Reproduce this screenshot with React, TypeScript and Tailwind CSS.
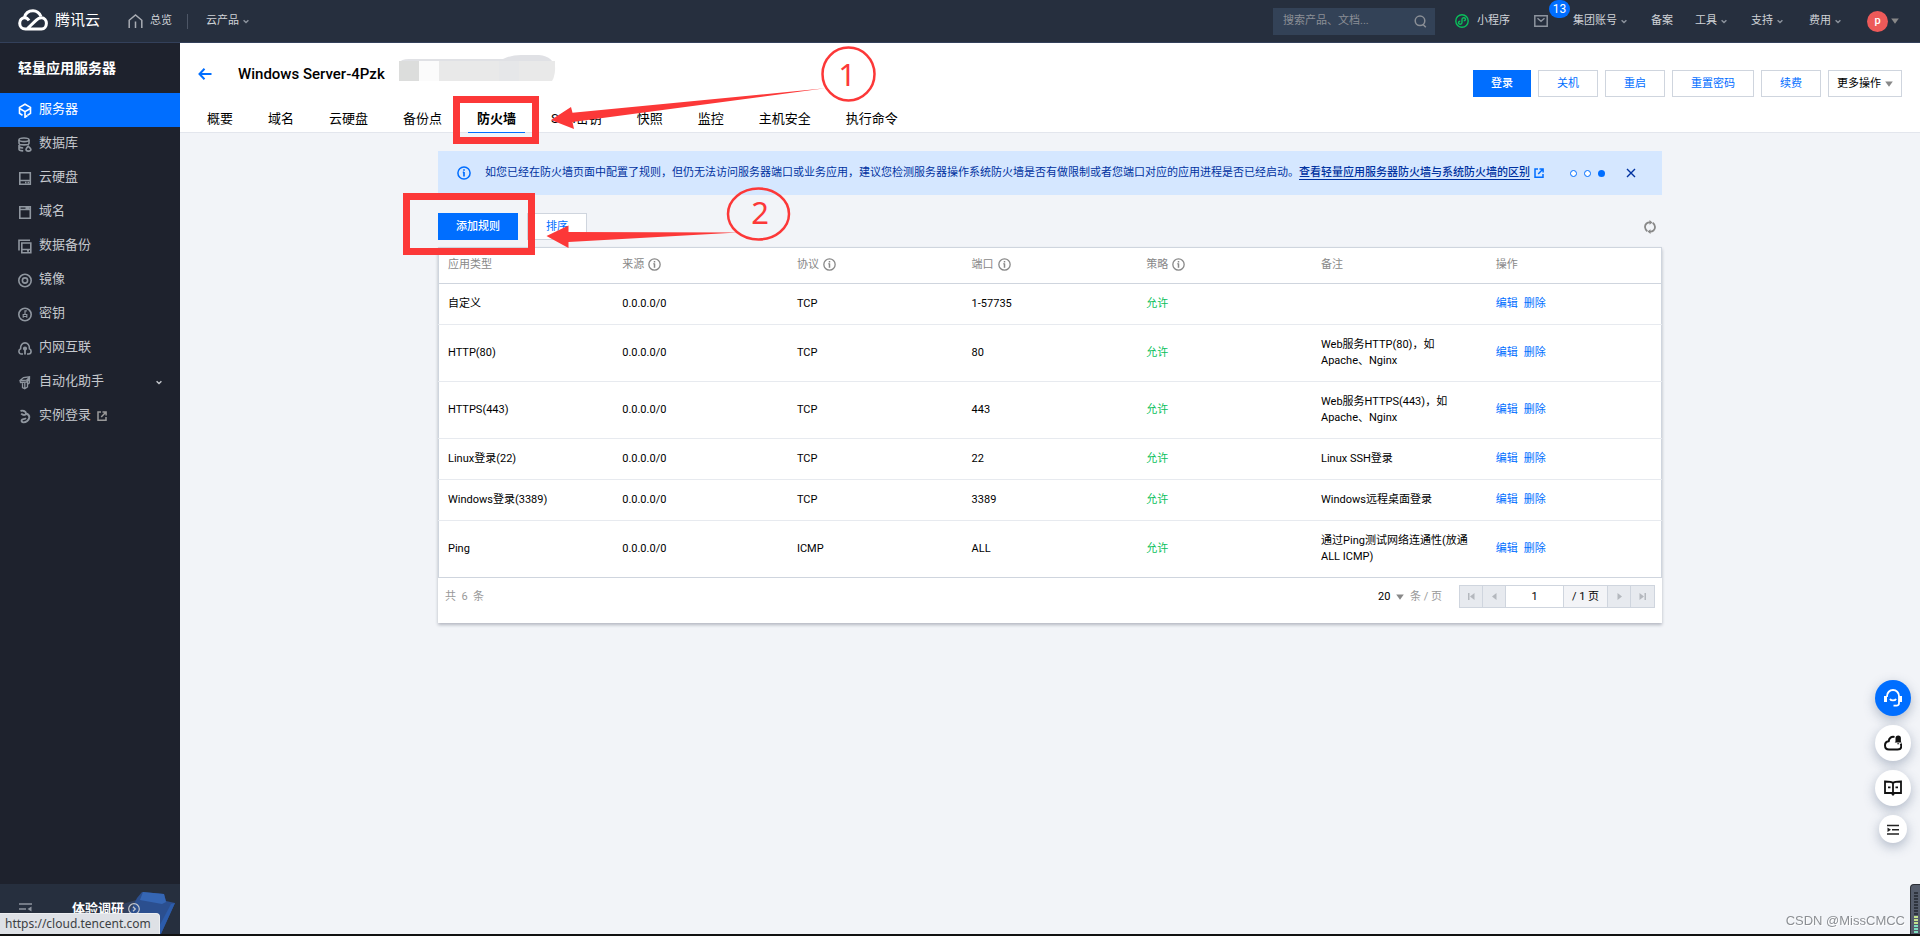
import type { ReactNode } from "react";

const MUTED = "#8f969f";

function Chevron({ className = "" }: { className?: string }) {
  return (
    <svg className={className} width="6" height="5" viewBox="0 0 6 5" fill="none" stroke="currentColor" strokeWidth="1.4">
      <path d="M0.6 1.2 3 3.6 5.4 1.2" />
    </svg>
  );
}

function Caret({ className = "" }: { className?: string }) {
  return (
    <svg className={className} width="8" height="6" viewBox="0 0 8 6" fill="#888">
      <path d="M0.2 0.5H7.8L4 5.8Z" />
    </svg>
  );
}

function InfoIcon({ size, width = 1.4 }: { size: number; width?: number }) {
  return (
    <svg width={size} height={size} viewBox="0 0 14 14" fill="none" stroke="currentColor" strokeWidth={width}>
      <circle cx="7" cy="7" r="6.1" />
      <path d="M7 6v4.5M7 3.2v1.6M5.800 6.300H7" strokeWidth={width + 0.2} />
    </svg>
  );
}

function ExternalIcon({ className = "", size = 10 }: { className?: string; size?: number }) {
  return (
    <svg className={className} width={size} height={size} viewBox="0 0 10 10" fill="none" stroke="currentColor" strokeWidth="1.5">
      <path d="M4 1H1V9.2H9V6" />
      <path d="M5.5 0.9H9.1V4.4M9 1 4.2 5.9" />
    </svg>
  );
}

function SideIcon({ children, color = MUTED }: { children: ReactNode; color?: string }) {
  return (
    <svg className="shrink-0" width="14" height="15" viewBox="0 0 14 15" fill="none" stroke={color} strokeWidth="1.6">
      {children}
    </svg>
  );
}

const sideItems: { label: string; icon: ReactNode; active?: boolean; more?: boolean; external?: boolean }[] = [
  {
    label: "服务器",
    active: true,
    icon: (
      <SideIcon color="#fff">
        <path d="M4.5 12.2 1.5 10.4V4.4L7 1.2l5.500 3.200v6L9.500 12.200" />
        <path d="M2 5.800 7 8.600l5-2.800M7 8.600v5.600l2.500-1.700" />
      </SideIcon>
    ),
  },
  {
    label: "数据库",
    icon: (
      <SideIcon>
        <ellipse cx="6" cy="2.800" rx="5" ry="1.800" />
        <path d="M1 3v3.200c0 1 2 1.700 5 1.700s5-.7 5-1.700V3M1 8v4.200c0 1 1.800 1.600 4.200 1.700M1 9.500c.6 1 2.200 1.500 4.200 1.500" />
        <path d="M10.200 9.200c-1.400 1.600-2.200 2.400-2.200 3.400 0 1 .9 1.500 2.400 1.500s2.500-.5 2.500-1.500-1-1.600-2.700-3.400Z" />
      </SideIcon>
    ),
  },
  {
    label: "云硬盘",
    icon: (
      <SideIcon>
        <path d="M1.800 1.800h10.500v11.500H1.800zM1.800 9.500h10.500M7 11.500h1.500M9.500 11.500H11" />
      </SideIcon>
    ),
  },
  {
    label: "域名",
    icon: (
      <SideIcon>
        <path d="M1.800 1.800h10.500v11.500H1.800zM1.800 4.500h10.500" />
        <path d="M7.500 3h4" strokeWidth="2" />
      </SideIcon>
    ),
  },
  {
    label: "数据备份",
    icon: (
      <SideIcon>
        <path d="M1 11.500V1.200h11M3.800 4h9v9.800h-9zM3.800 10.500h9M9 12h2" />
      </SideIcon>
    ),
  },
  {
    label: "镜像",
    icon: (
      <SideIcon>
        <circle cx="7" cy="7.500" r="6.200" />
        <circle cx="7" cy="7.500" r="2.600" />
      </SideIcon>
    ),
  },
  {
    label: "密钥",
    icon: (
      <SideIcon>
        <circle cx="7" cy="7.500" r="6.200" />
        <path d="M5.200 10.800V7.500h3.600v3.300M7 7.500V3.800h1.800M5.200 9.500h3.500" strokeWidth="1.200" />
      </SideIcon>
    ),
  },
  {
    label: "内网互联",
    icon: (
      <SideIcon>
        <path d="M5 13H3.500C1.800 13 .9 11.800.9 10.300c0-1.400.7-2.300 1.700-2.600C2.300 4 4.400 1.900 7 1.900S11.700 4 11.400 7.700c1 .3 1.700 1.200 1.700 2.600 0 1.500-.9 2.700-2.600 2.700H9" />
        <path d="M7 13.500V7" strokeWidth="1.800" />
        <circle cx="7" cy="7.500" r="1.300" fill={MUTED} />
      </SideIcon>
    ),
  },
  {
    label: "自动化助手",
    more: true,
    icon: (
      <SideIcon>
        <path d="M2 5.500 5.500 2.500 11.500 1.800V4L8.500 7 2.500 7.500ZM4.500 7.500V12.500L6.800 13.800 9.500 12V6.500M6.800 13.500V7.500M9.500 9.500l1.800-1.500V4.500M3 5.500l5.500-.3 2.500-2.500" strokeWidth="1.300" />
      </SideIcon>
    ),
  },
  {
    label: "实例登录",
    external: true,
    icon: (
      <SideIcon>
        <path d="M2.500 2C4.500 1.200 7.800 2 8 4.300 8.200 6 5.500 6.800 3.200 4.600M8 4.500c2 .6 3.500 2 3.300 3.900-.3 2.900-3.300 5.100-5.800 5-1.500-.1-2.300-1.200-1.800-2.300.6-1.200 2.700-.6 4.300-2" strokeWidth="1.900" />
      </SideIcon>
    ),
  },
];

const tabs = ["概要", "域名", "云硬盘", "备份点", "防火墙", "SSH密钥", "快照", "监控", "主机安全", "执行命令"];

const rules = [
  { type: "自定义", protocol: "TCP", port: "1-57735", note: "" },
  { type: "HTTP(80)", protocol: "TCP", port: "80", note: "Web服务HTTP(80)，如 Apache、Nginx" },
  { type: "HTTPS(443)", protocol: "TCP", port: "443", note: "Web服务HTTPS(443)，如 Apache、Nginx" },
  { type: "Linux登录(22)", protocol: "TCP", port: "22", note: "Linux SSH登录" },
  { type: "Windows登录(3389)", protocol: "TCP", port: "3389", note: "Windows远程桌面登录" },
  { type: "Ping", protocol: "ICMP", port: "ALL", note: "通过Ping测试网络连通性(放通 ALL ICMP)" },
];

const columns = [
  { label: "应用类型", info: false },
  { label: "来源", info: true },
  { label: "协议", info: true },
  { label: "端口", info: true },
  { label: "策略", info: true },
  { label: "备注", info: false },
  { label: "操作", info: false },
];

function NavLink({ label, className, chevron = true }: { label: string; className: string; chevron?: boolean }) {
  return (
    <a href="#" className={`flex shrink-0 items-center gap-1 ${className}`}>
      {label}
      {chevron && <Chevron className="text-[#8d949e]" />}
    </a>
  );
}

function TopBar() {
  return (
    <header className="flex h-[43px] shrink-0 items-center border-b border-[#33405a] bg-[#262f3e] pr-[21px] pl-[18px] text-[11px] whitespace-nowrap text-[#d0d3d8]">
      <a href="#" className="flex items-center gap-[7px] pb-[2px] text-[15px] text-white">
        <svg width="30" height="22" viewBox="0 0 30 22" fill="none" stroke="#fff" strokeWidth="3">
          <path d="M6.500 8.500C7.500 4 11 1.800 15 1.800S21.500 4.200 23 7.500" />
          <path d="M11 11.500C9.800 9.600 8.200 8.700 6.700 8.700 3.800 8.700 1.700 11 1.700 14.200c0 3.500 2.300 5.800 5.800 5.800H23.500c3 0 4.900-2.600 4.900-5.700 0-3-2-5.600-5-5.600-2.200 0-3.700 1-5.400 2.700L9.500 19.500" />
        </svg>
        腾讯云
      </a>
      <a href="#" className="ml-7 flex items-center gap-[7px]">
        <svg width="15" height="14" viewBox="0 0 15 14" fill="none" stroke="#a9adb4" strokeWidth="1.5">
          <path d="M1.200 14V6.300L7.500 1l6.300 5.300V14M7.500 7.500V14" />
        </svg>
        总览
      </a>
      <span className="ml-[15px] h-[15px] w-px bg-[#4d5666]" />
      <NavLink label="云产品" className="ml-[18px]" />

      <div className="ml-auto flex h-[27px] w-[162px] shrink-0 items-center bg-[#334257] pr-2 pl-[10px]">
        <input aria-label="搜索" placeholder="搜索产品、文档..." className="min-w-0 flex-1 bg-transparent outline-none placeholder:text-[#8b8f96]" />
        <svg width="13" height="13" viewBox="0 0 13 13" fill="none" stroke="#8b8f96" strokeWidth="1.500">
          <circle cx="6" cy="5.800" r="4.800" />
          <path d="M9 9.500 11.800 12.300" />
        </svg>
      </div>
      <a href="#" className="ml-5 flex shrink-0 items-center gap-2">
        <svg width="14" height="14" viewBox="0 0 14 14" fill="none" stroke="#0abf5b" strokeWidth="1.400">
          <circle cx="7" cy="7" r="6.200" />
          <path d="M5.300 7.200C4 7.200 3.400 8 3.500 8.800c.1.900.9 1.500 1.800 1.400 1-.1 1.700-.8 1.700-1.700V5.500c0-.9.700-1.600 1.700-1.700.9-.1 1.700.5 1.800 1.400.1.800-.5 1.600-1.800 1.600" />
        </svg>
        小程序
      </a>
      <button type="button" aria-label="消息" className="relative ml-6 shrink-0">
        <svg width="14" height="12" viewBox="0 0 14 12" fill="none" stroke="#8d949e" strokeWidth="1.500">
          <path d="M.8.800h12.400v10.400H.8zM3.500 3.200 7 6.200l3.500-3" />
        </svg>
        <span className="absolute -top-[15px] left-[15px] flex h-[18px] w-[21px] items-center justify-center rounded-full bg-[#006eff] text-[12px] text-white">13</span>
      </button>
      <NavLink label="集团账号" className="ml-[25px]" />
      <NavLink label="备案" chevron={false} className="ml-[24px]" />
      <NavLink label="工具" className="ml-[22px]" />
      <NavLink label="支持" className="ml-[24px]" />
      <NavLink label="费用" className="ml-[26px]" />
      <button type="button" aria-label="账户" className="ml-[26px] flex shrink-0 items-center gap-[3px]">
        <span className="flex size-[21px] items-center justify-center rounded-full bg-[#ed5a59] text-[11px] font-medium text-white">p</span>
        <Caret />
      </button>
    </header>
  );
}

function Sidebar() {
  return (
    <aside className="flex w-[180px] shrink-0 flex-col bg-[#1e222d] text-[13px]">
      <h1 className="flex h-[50px] items-center pl-[18px] text-[14px] font-bold text-white">轻量应用服务器</h1>
      <nav className="flex-1">
        {sideItems.map((item) => (
          <a
            key={item.label}
            href="#"
            className={`flex h-[34px] items-center pr-[18px] pl-[18px] ${item.active ? "bg-[#006eff] text-white" : "text-[#c5c8cd]"}`}
          >
            {item.icon}
            <span className="ml-[7px] pb-[2px]">{item.label}</span>
            {item.external && <ExternalIcon className="ml-[6px] text-[#9a9a9a]" />}
            {item.more && <Chevron className="ml-auto" />}
          </a>
        ))}
      </nav>
      <div className="relative flex h-[52px] items-start bg-[#262f3e] pt-[15px] pl-[19px] font-bold text-white">
        <svg className="absolute right-0 bottom-0" width="64" height="48" viewBox="0 0 64 48">
          <path d="M0 18 20 12 30 26 8 34Z" fill="#31405f" />
          <path d="M21 10 26 4 48 6 50 13 59 15 44 48H24L14 24Z" fill="#2b4f8f" />
          <path d="M27 4 48 6 50 14 46 16 24 12Z" fill="#3566b4" />
          <path d="M59 15 44 48H38L55 16Z" fill="#2c5cab" />
        </svg>
        <svg className="mt-1" width="13" height="12" viewBox="0 0 13 12" fill="none" stroke="#8d949e" strokeWidth="1.500">
          <path d="M0 1h13M0 6h7M0 11h13" />
          <path d="M12.500 3.500v5L8.500 6Z" fill="#8d949e" stroke="none" />
        </svg>
        <a href="#" className="relative ml-[40px] flex items-center gap-1 leading-5">
          体验调研
          <svg width="12" height="12" viewBox="0 0 12 12" fill="none" stroke="#c5c8cd" strokeWidth="1.200">
            <circle cx="6" cy="6" r="5.300" />
            <path d="M5 3.800 7.300 6 5 8.200" />
          </svg>
        </a>
      </div>
    </aside>
  );
}

function OutlineButton({ children }: { children: ReactNode }) {
  return (
    <button type="button" className="h-[27px] shrink-0 border border-[#cfd5de] bg-white px-[18px] pt-px text-[11px] text-[#006eff]">
      {children}
    </button>
  );
}

function PrimaryButton({ children }: { children: ReactNode }) {
  return (
    <button type="button" className="h-[27px] shrink-0 bg-[#006eff] px-[18px] pt-px text-[11px] font-medium text-white">
      {children}
    </button>
  );
}

function PageHeader() {
  return (
    <div className="flex h-[90px] justify-between border-b border-[#e3e6ed] bg-white pr-[18px]">
      <div className="flex flex-col justify-between">
        <div className="flex h-[62px] items-center pl-[18px]">
          <button type="button" aria-label="返回">
            <svg width="14" height="12" viewBox="0 0 14 12" fill="none" stroke="#006eff" strokeWidth="2">
              <path d="M6.500.800 1.500 6l5 5.200M1.500 6H13.500" />
            </svg>
          </button>
          <h2 className="ml-[26px] w-[143px] text-[15px] font-medium whitespace-nowrap text-black">Windows Server-4Pzk</h2>
          <svg className="mb-3 ml-[18px]" width="158" height="27" viewBox="0 0 158 27">
            <path d="M0 8Q2 4 10 4H104Q112 0 122 0H140Q155 1 157 16V23L153 26H0Z" fill="#e0e1e5" />
            <path d="M0 6H156V26H0Z" fill="#e9e9e9" />
            <path d="M156 6h2v20h-5q4-6 3-20Z" fill="#fff" />
            <path d="M0 6h20v20H0Z" fill="#dcdddc" />
            <path d="M20 6h20v20H20Z" fill="#fbfbfb" />
            <path d="M100 6h20v20H100Z" fill="#e6e7e9" />
          </svg>
        </div>
        <nav className="flex gap-[17px] pl-[18px] text-[13px] whitespace-nowrap text-black">
          {tabs.map((tab) => (
            <a
              key={tab}
              href="#"
              className={`-mb-px h-[26px] border-b px-[9px] leading-6 ${tab === "防火墙" ? "border-[#006eff] font-bold" : "border-transparent"}`}
            >
              {tab}
            </a>
          ))}
        </nav>
      </div>
      <div className="flex gap-[7px] pt-[27px] whitespace-nowrap">
        <PrimaryButton>登录</PrimaryButton>
        <OutlineButton>关机</OutlineButton>
        <OutlineButton>重启</OutlineButton>
        <OutlineButton>重置密码</OutlineButton>
        <OutlineButton>续费</OutlineButton>
        <button type="button" className="flex h-[27px] items-center gap-[4px] border border-[#cfd5de] bg-white px-2 pt-px text-[11px] text-black">
          更多操作
          <Caret />
        </button>
      </div>
    </div>
  );
}

function Notice() {
  return (
    <div className="flex h-11 items-center bg-[#d5e7ff] pr-[26px] pl-[19px] text-[11px] whitespace-nowrap text-[#0032a0]">
      <span className="text-[#006eff]">
        <InfoIcon size={14} width={1.5} />
      </span>
      <p className="ml-[14px]">
        如您已经在防火墙页面中配置了规则，但仍无法访问服务器端口或业务应用，建议您检测服务器操作系统防火墙是否有做限制或者您端口对应的应用进程是否已经启动。
        <a href="#" className="border-b border-[#0032a0] font-medium">
          查看轻量应用服务器防火墙与系统防火墙的区别
        </a>
      </p>
      <ExternalIcon className="ml-1 text-[#006eff]" />
      <div className="ml-auto flex gap-[7px]">
        <span className="size-[7px] rounded-full border border-[#006eff] bg-white" />
        <span className="size-[7px] rounded-full border border-[#006eff] bg-white" />
        <span className="size-[7px] rounded-full bg-[#006eff]" />
      </div>
      <button type="button" aria-label="关闭" className="ml-[21px]">
        <svg width="10" height="10" viewBox="0 0 10 10" fill="none" stroke="#0032a0" strokeWidth="1.400">
          <path d="M1 1 9 9M9 1 1 9" />
        </svg>
      </button>
    </div>
  );
}

function PagerButton({ label, d }: { label: string; d: string }) {
  return (
    <button type="button" aria-label={label} className="flex w-[23px] items-center justify-center border-r border-[#cfd5de] bg-[#e7eaef] last:border-r-0">
      <svg width="7" height="7" viewBox="0 0 7 7" fill="#b4b8be">
        <path d={d} />
      </svg>
    </button>
  );
}

function RuleTable() {
  return (
    <section className="mt-[7px] bg-white text-[11px] leading-4 text-black shadow-[0_2px_3px_rgba(54,58,80,0.32)]">
      <table className="w-full table-fixed border border-[#cfd5de] text-left">
        <thead>
          <tr className="h-9 border-b border-[#cfd5de] text-[#888]">
            {columns.map((c) => (
              <th key={c.label} className="px-[9px] pb-[2px] font-normal">
                <span className="flex items-center gap-1">
                  {c.label}
                  {c.info && <InfoIcon size={13} />}
                </span>
              </th>
            ))}
          </tr>
        </thead>
        <tbody>
          {rules.map((r) => (
            <tr key={r.type} className="border-b border-[#e7eaef] last:border-b-0">
              <td className="px-[9px] py-3">{r.type}</td>
              <td className="px-[9px] py-3">0.0.0.0/0</td>
              <td className="px-[9px] py-3">{r.protocol}</td>
              <td className="px-[9px] py-3">{r.port}</td>
              <td className="px-[9px] py-3 text-[#0abf5b]">允许</td>
              <td className="px-[9px] py-3">{r.note}</td>
              <td className="px-[9px] py-3 text-[#006eff]">
                <span className="flex gap-[6px]">
                  <a href="#">编辑</a>
                  <a href="#">删除</a>
                </span>
              </td>
            </tr>
          ))}
        </tbody>
      </table>
      <div className="flex h-[45px] items-start pt-[7px] pr-[7px] pl-[7px] text-[#999]">
        <span className="leading-6">共 &nbsp;6 &nbsp;条</span>
        <label className="ml-auto flex h-6 items-center">
          <select aria-label="每页条数" defaultValue="20" className="w-[18px] appearance-none bg-transparent text-black">
            <option value="20">20</option>
          </select>
          <Caret />
          <span className="ml-[6px]">条 / 页</span>
        </label>
        <div className="ml-[17px] flex h-[23px] border border-[#cfd5de]">
          <PagerButton label="首页" d="M0 0h1.500v7H0ZM6.500 0v7L2 3.500Z" />
          <PagerButton label="上一页" d="M5.500 0v7L1 3.500Z" />
          <input aria-label="页码" defaultValue="1" className="w-[57px] bg-white text-center text-black" />
          <span className="w-[45px] border-x border-[#cfd5de] bg-[#f3f4f7] text-center leading-[21px] text-black">/ 1 页</span>
          <PagerButton label="下一页" d="M1.500 0v7L6 3.500Z" />
          <PagerButton label="末页" d="M5.500 0H7v7H5.500ZM.5 0v7L5 3.500Z" />
        </div>
      </div>
    </section>
  );
}

function FloatingTools() {
  const round = "flex items-center justify-center rounded-full shadow-[0_4px_12px_rgba(55,75,110,0.35)]";
  return (
    <div className="fixed right-[9px] bottom-[93px] flex flex-col items-center gap-[9px]">
      <button type="button" aria-label="客服" className={`${round} size-9 bg-[#006eff]`}>
        <svg width="18" height="18" viewBox="0 0 18 18" fill="none" stroke="#fff" strokeWidth="1.800">
          <path d="M3 8V7a6 6 0 0 1 12 0v7a2.500 2.500 0 0 1-2.500 2.700H9.500" />
          <path d="M1.500 7v6M16.500 7v6" strokeWidth="3" />
          <path d="M6 9.800c1 2.200 5 2.200 6 0" />
        </svg>
      </button>
      <button type="button" aria-label="云通知" className={`${round} size-9 bg-white`}>
        <svg width="18" height="16" viewBox="0 0 18 16" fill="none" stroke="#111" strokeWidth="2">
          <path d="M10.500 2C7.500 1.200 5 3 4.700 6.200 2.500 6.500 1 8 1 10.300 1 13 2.800 14.500 5 14.500h8.500c2.300 0 3.800-1.500 3.800-3.500 0-1-.3-1.700-.8-2.200" />
          <path d="M11.500 6.500V3.200a2.700 2.700 0 0 1 5.400 0v3.300l.8 1h-7zM13.300 8.300h1.800v.9h-1.800z" fill="#111" stroke="none" />
        </svg>
      </button>
      <button type="button" aria-label="文档" className={`${round} size-9 bg-white`}>
        <svg width="18" height="16" viewBox="0 0 18 16" fill="none" stroke="#111" strokeWidth="1.800">
          <path d="M9 3C8 1.800 6.500 1.500 1 1.500v11.500h6.500L9 14.500 10.500 13H17V1.500C11.500 1.500 10 1.800 9 3ZM9 3v12.500M4 7.300h2.500M11.500 7.300H14" />
        </svg>
      </button>
      <button type="button" aria-label="展开" className={`${round} size-7 bg-white`}>
        <svg width="12" height="11" viewBox="0 0 12 11" fill="none" stroke="#222" strokeWidth="1.500">
          <path d="M0 1.500h12M5 5.700h7M0 10h12" />
          <path d="M.5 3.500v4.400L4 5.700Z" fill="#222" stroke="none" />
        </svg>
      </button>
    </div>
  );
}

function Annotations() {
  return (
    <svg className="pointer-events-none absolute top-0 left-0" width="900" height="270" viewBox="0 0 900 270" fill="none" stroke="#fc3838">
      <rect x="456.500" y="99.500" width="79" height="41" strokeWidth="7" />
      <rect x="406.500" y="196.500" width="125" height="55" strokeWidth="7" />
      <ellipse cx="848.500" cy="74" rx="26" ry="26.500" strokeWidth="2.500" />
      <ellipse cx="758.500" cy="214" rx="30.500" ry="25.500" strokeWidth="2.500" />
      <path d="M551 120 571 107 572.500 112.700 825 88.300 572.500 122 574 129Z" fill="#fc3838" stroke="none" />
      <path d="M546.500 236 568.500 225.500V232L738 232.500 568.500 242V248Z" fill="#fc3838" stroke="none" />
      <g fill="#fc3838" stroke="none" textAnchor="middle" fontSize="31" fontFamily='"Noto Sans", sans-serif'>
        <text x="847" y="86">1</text>
        <text x="760" y="224">2</text>
      </g>
    </svg>
  );
}

export default function App() {
  return (
    <div className='relative flex min-h-screen flex-col bg-[#f2f4f8] font-[Roboto,"Noto_Sans_CJK_SC",sans-serif]'>
      <TopBar />
      <div className="flex flex-1">
        <Sidebar />
        <main className="min-w-0 flex-1">
          <PageHeader />
          <div className="mx-auto max-w-[1224px] pt-[18px]">
            <Notice />
            <div className="mt-[18px] flex items-center gap-[9px]">
              <PrimaryButton>添加规则</PrimaryButton>
              <OutlineButton>排序</OutlineButton>
              <button type="button" aria-label="刷新" className="mr-[6px] ml-auto">
                <svg width="12" height="14" viewBox="0 0 12 14" fill="none" stroke="#888" strokeWidth="1.800">
                  <path d="M3.300 11.200C.5 9 .3 5.500 2.500 3.500 3.500 2.600 4.700 2.200 6 2.300M8.700 2.800c2.800 2.200 3 5.700.8 7.700-1 .9-2.200 1.300-3.500 1.200" />
                  <path d="M5.500 0 8.500 2.500 5.500 4.800ZM6.500 9.200 3.500 11.500 6.500 14Z" fill="#888" stroke="none" />
                </svg>
              </button>
            </div>
            <RuleTable />
          </div>
        </main>
      </div>
      <Annotations />
      <FloatingTools />
      <div className="fixed right-[15px] bottom-[5px] font-['Liberation_Sans',Arial,sans-serif] text-[13px] leading-5 text-[#8c8f94] [text-shadow:1px_1px_0_#fff]">
        CSDN @MissCMCC
      </div>
      <div className="fixed right-0 bottom-0 flex h-[52px] w-[10px] flex-col justify-end gap-px rounded-tl border-t border-l border-[#2c2f36] bg-[#555c6b] pb-[3px] pl-[3px]">
        {Array.from({ length: 14 }, (_, i) => (
          <span key={i} className={`h-[2px] w-1 ${i < 8 ? "bg-[#2f343e]" : i < 11 ? "bg-[#c3e38d]" : "bg-[#7fe0c0]"}`} />
        ))}
      </div>
      <div className="fixed bottom-[2px] left-0 h-[21px] w-[160px] rounded-tr border-t border-r border-[#eceef1] bg-[#dee1e6] pl-[5px] font-['Noto_Sans',sans-serif] text-[12px] leading-5 text-[#3c4043]">
        https://cloud.tencent.com
      </div>
      <div className="fixed inset-x-0 bottom-0 h-[2px] bg-[#111]" />
    </div>
  );
}
